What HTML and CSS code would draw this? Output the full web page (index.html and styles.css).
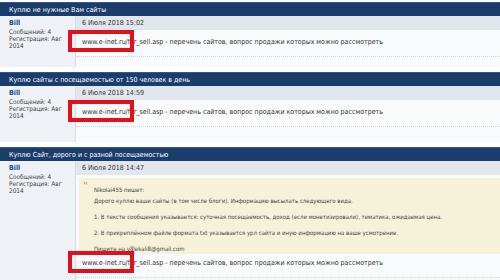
FILE: index.html
```html
<!DOCTYPE html>
<html>
<head>
  <title>Куплю сайты</title>
  <link rel="stylesheet" href="styles.css">
</head>
<body>

<div class="thread">
  <div class="thread-title">Куплю не нужные Вам сайты</div>
  <div class="post">
    <div class="author">
      <div class="name">Bill</div>
      <div>Сообщений: 4</div>
      <div>Регистрация: Авг<br>2014</div>
    </div>
    <div class="content">
      <div class="date">6 Июля 2018 15:02</div>
      <div class="message">
        www.e-inet.ru/for_sell.asp - перечень сайтов, вопрос продажи которых можно рассмотреть
        <span class="mark"></span>
      </div>
      <div class="sig"></div>
    </div>
  </div>
</div>

<div class="thread">
  <div class="thread-title">Куплю сайты с посещаемостью от 150 человек в день</div>
  <div class="post">
    <div class="author">
      <div class="name">Bill</div>
      <div>Сообщений: 4</div>
      <div>Регистрация: Авг<br>2014</div>
    </div>
    <div class="content">
      <div class="date">6 Июля 2018 14:59</div>
      <div class="message">
        www.e-inet.ru/for_sell.asp - перечень сайтов, вопрос продажи которых можно рассмотреть
        <span class="mark"></span>
      </div>
      <div class="sig tall"></div>
    </div>
  </div>
</div>

<div class="thread">
  <div class="thread-title">Куплю Сайт, дорого и с разной посещаемостью</div>
  <div class="post">
    <div class="author">
      <div class="name">Bill</div>
      <div>Сообщений: 4</div>
      <div>Регистрация: Авг<br>2014</div>
    </div>
    <div class="content">
      <div class="date">6 Июля 2018 14:47</div>
      <div class="quote">
        <span class="quote-mark">&#8223;</span>
        <p>Nikolai455 пишет:<br>Дорого куплю ваши сайты (в том числе блоги). Информацию высылать следующего вида.</p>
        <p>1. В тексте сообщения указывается: суточная посещаемость, доход (если монетизировали), тематика, ожидаемая цена.</p>
        <p>2. В прикреплённом файле формата txt указывается урл сайта и иную информацию на ваше усмотрение.</p>
        <p>Пишите на v8lekali8@gmail.com</p>
      </div>
      <div class="message">
        www.e-inet.ru/for_sell.asp - перечень сайтов, вопрос продажи которых можно рассмотреть
        <span class="mark"></span>
      </div>
      <div class="sig"></div>
    </div>
  </div>
</div>

</body>
</html>
```

FILE: styles.css
```css
body {
  margin: 0;
  padding-top: 2px;
  background: #fff;
  color: #3a3a3a;
  font-family: "DejaVu Sans Condensed", "DejaVu Sans", sans-serif;
  font-size: 7px;
  overflow: hidden;
}

.thread {
  margin-bottom: 5px;
}

.thread-title {
  height: 14px;
  line-height: 14px;
  padding-left: 9px;
  background: #1a3d6b;
  border-top: 1px solid #35598a;
  box-sizing: border-box;
  color: #fff;
}

.post {
  display: grid;
  grid-template-columns: 76px 1fr;
}

.author {
  background: #eef2f7;
  border-right: 1px solid #d6dde6;
  padding: 4px 4px 3px 9px;
  font-size: 6.4px;
  line-height: 7px;
  color: #444;
}

.author .name {
  color: #1b4b83;
  font-weight: bold;
  font-size: 7px;
  margin-bottom: 2px;
}

.content {
  background: #f9fafc;
}

.date {
  height: 14px;
  line-height: 14px;
  padding-left: 6px;
  background: #e2e7ee;
  color: #333;
}

.message {
  position: relative;
  padding: 7px 6px 9px;
  line-height: 10px;
  color: #333;
  border-bottom: 1px dotted #cfd6df;
}

.quote + .message {
  padding-top: 4px;
}

.quote + .message .mark {
  top: -3px;
}

.mark {
  position: absolute;
  left: -8px;
  top: 0;
  width: 66px;
  height: 22px;
  border: 4px solid #e0101c;
  box-sizing: border-box;
}

.sig {
  height: 10px;
}

.sig.tall {
  height: 15px;
}

.quote {
  position: relative;
  margin: 3px 0 0 3px;
  padding: 6px 6px 0 15px;
  background: #f6f1d9;
  font-size: 6px;
  line-height: 11px;
  color: #444;
}

.quote p {
  margin: 0 0 5px;
}

.quote p:last-child {
  margin-bottom: 0;
}

.quote-mark {
  position: absolute;
  left: 4px;
  top: 3px;
  font-size: 11px;
  color: #b5a86e;
}
```
